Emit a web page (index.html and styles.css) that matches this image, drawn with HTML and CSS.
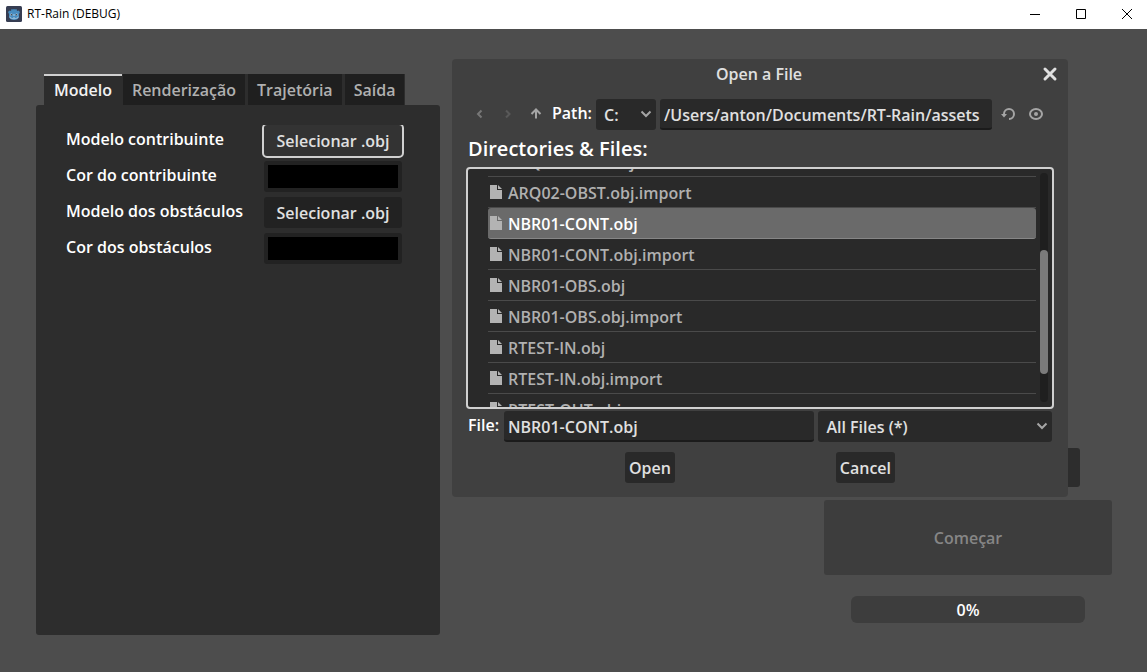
FILE: index.html
```html
<!DOCTYPE html>
<html lang="pt">
<head>
<meta charset="utf-8">
<meta name="viewport" content="width=device-width, initial-scale=1">
<title>RT-Rain (DEBUG)</title>
<link rel="stylesheet" href="styles.css">
</head>
<body>
<svg class="defs" width="0" height="0" aria-hidden="true">
  <symbol id="file" viewBox="0 0 12 14"><path d="M0 0H7V5H12V14H0ZM8 0L12 4H8Z"/></symbol>
  <symbol id="chevron" viewBox="0 0 12 8"><path d="M1.5 1.5L6 6L10.500 1.500" fill="none" stroke="currentColor" stroke-width="2"/></symbol>
</svg>

<header class="titlebar">
  <svg class="app-icon" viewBox="0 0 16 16" aria-hidden="true">
    <rect width="16" height="16" rx="1.500" fill="#363d52"/>
    <path d="M2 6L3.500 4.500L5 5L5.500 3L7 3.500L8 3L9 3.500L10.500 3L11 5L12.500 4.500L14 6L13 8V11Q12 14 8 14T3 11V8Z" fill="#478cbf"/>
    <path d="M3 10.500L5 11L5.500 12H7L7.500 11H8.500L9 12H10.500L11 11L13 10.500Q12.500 13 8 13.300Q3.500 13 3 10.500Z" fill="#8fb8d6"/>
    <circle cx="5.300" cy="8.700" r="1.100" fill="#b5cfe2"/><circle cx="10.700" cy="8.700" r="1.100" fill="#b5cfe2"/>
    <circle cx="5.500" cy="8.700" r=".8" fill="#414042"/><circle cx="10.500" cy="8.700" r=".8" fill="#414042"/>
    <rect x="7.600" y="8" width=".8" height="2" fill="#d5e4ef"/>
  </svg>
  <span class="app-title">RT-Rain (DEBUG)</span>
  <div class="window-controls">
    <button type="button" aria-label="Minimizar"><svg viewBox="0 0 12 12"><path d="M1 6.500H11"/></svg></button>
    <button type="button" aria-label="Maximizar"><svg viewBox="0 0 12 12"><path d="M1.500 1.500H10.500V10.500H1.500Z"/></svg></button>
    <button type="button" aria-label="Fechar"><svg viewBox="0 0 12 12"><path d="M1 1L11 11M11 1L1 11"/></svg></button>
  </div>
</header>

<main class="workspace">
  <section class="settings">
    <div class="tabs" role="tablist">
      <button type="button" class="tab tab-active" role="tab" aria-selected="true">Modelo</button>
      <button type="button" class="tab" role="tab" aria-selected="false">Renderização</button>
      <button type="button" class="tab" role="tab" aria-selected="false">Trajetória</button>
      <button type="button" class="tab" role="tab" aria-selected="false">Saída</button>
    </div>
    <div class="panel" role="tabpanel">
      <div class="form">
        <label for="model-a">Modelo contribuinte</label>
        <button type="button" class="button button-focused" id="model-a">Selecionar .obj</button>
        <label for="color-a">Cor do contribuinte</label>
        <input type="color" class="color" id="color-a" value="#000000">
        <label for="model-b">Modelo dos obstáculos</label>
        <button type="button" class="button" id="model-b">Selecionar .obj</button>
        <label for="color-b">Cor dos obstáculos</label>
        <input type="color" class="color" id="color-b" value="#000000">
      </div>
    </div>
  </section>

  <section class="actions">
    <div class="field-behind"></div>
    <button type="button" class="start" disabled>Começar</button>
    <div class="progress" role="progressbar" aria-valuenow="0" aria-valuemin="0" aria-valuemax="100">0%</div>
  </section>

  <section class="dialog" role="dialog" aria-labelledby="dialog-title">
    <div class="dialog-header">
      <h1 class="dialog-title" id="dialog-title">Open a File</h1>
      <button type="button" class="dialog-close" aria-label="Close"><svg viewBox="0 0 16 16"><path d="M3 3L13 13M13 3L3 13"/></svg></button>
    </div>

    <div class="path-row">
      <button type="button" class="tool tool-dim" aria-label="Back"><svg viewBox="0 0 16 16"><path d="M9.500 4.500L6 8L9.500 11.500"/></svg></button>
      <button type="button" class="tool tool-dimmer" aria-label="Forward"><svg viewBox="0 0 16 16"><path d="M6 4.500L9.500 8L6 11.500"/></svg></button>
      <button type="button" class="tool" aria-label="Up"><svg viewBox="0 0 16 16"><path d="M8 12.500V4.500M3.500 8L8 3.500L12.500 8"/></svg></button>
      <label class="label" for="path">Path:</label>
      <div class="select drive">
        <select aria-label="Drive"><option>C:</option></select>
        <svg class="chevron"><use href="#chevron"/></svg>
      </div>
      <input class="text path" id="path" type="text" value="/Users/anton/Documents/RT-Rain/assets">
      <button type="button" class="tool" aria-label="Refresh"><svg viewBox="0 0 16 16"><path d="M4 9V8A5 5 0 1 1 9 13"/><path class="solid" d="M1 8H7L4 11.500Z"/></svg></button>
      <button type="button" class="tool" aria-label="Show hidden files"><svg viewBox="0 0 16 16"><ellipse cx="8" cy="8" rx="6" ry="5"/><circle class="solid" cx="8" cy="8" r="2"/></svg></button>
    </div>

    <h2 class="heading">Directories &amp; Files:</h2>

    <div class="browser">
      <ul class="files">
        <li><svg class="file"><use href="#file"/></svg><span>ARQ02-OBST.obj</span></li>
        <li><svg class="file"><use href="#file"/></svg><span>ARQ02-OBST.obj.import</span></li>
        <li class="selected"><svg class="file"><use href="#file"/></svg><span>NBR01-CONT.obj</span></li>
        <li><svg class="file"><use href="#file"/></svg><span>NBR01-CONT.obj.import</span></li>
        <li><svg class="file"><use href="#file"/></svg><span>NBR01-OBS.obj</span></li>
        <li><svg class="file"><use href="#file"/></svg><span>NBR01-OBS.obj.import</span></li>
        <li><svg class="file"><use href="#file"/></svg><span>RTEST-IN.obj</span></li>
        <li><svg class="file"><use href="#file"/></svg><span>RTEST-IN.obj.import</span></li>
        <li><svg class="file"><use href="#file"/></svg><span>RTEST-OUT.obj</span></li>
      </ul>
      <div class="scrollbar"><div class="thumb"></div></div>
    </div>

    <div class="file-row">
      <label class="label" for="file-name">File:</label>
      <input class="text file-name" id="file-name" type="text" value="NBR01-CONT.obj">
      <div class="select filter">
        <select aria-label="Filter"><option>All Files (*)</option></select>
        <svg class="chevron"><use href="#chevron"/></svg>
      </div>
    </div>

    <div class="dialog-buttons">
      <button type="button" class="dialog-button">Open</button>
      <button type="button" class="dialog-button">Cancel</button>
    </div>
  </section>
</main>
</body>
</html>
```
FILE: styles.css
```css
* {
  box-sizing: border-box;
}

body {
  margin: 0;
  min-height: 100vh;
  display: flex;
  flex-direction: column;
  background: #4d4d4d;
  color: #fff;
  font: 600 16px/22px "Open Sans", "Noto Sans", sans-serif;
}

button,
input,
select {
  margin: 0;
  border: 0;
  font: inherit;
  color: #e0e0e0;
}

svg {
  display: block;
  flex: none;
}

.defs {
  position: absolute;
}

/* Window title bar */
.titlebar {
  height: 29px;
  padding: 0 8px 2px 6px;
  display: flex;
  align-items: center;
  gap: 5px;
  background: #fff;
  color: #000;
}

.app-icon {
  width: 16px;
  height: 16px;
}

.app-title {
  font: 400 12px/16px "Open Sans", sans-serif;
}

.window-controls {
  margin-left: auto;
  display: flex;
  gap: 22px;
}

.window-controls button {
  width: 24px;
  height: 24px;
  padding: 6px;
  background: none;
}

.window-controls svg {
  width: 12px;
  height: 12px;
  fill: none;
  stroke: #000;
}

/* Workspace */
.workspace {
  position: relative;
  flex: 1;
  display: grid;
  grid-template-columns: 404fr 672fr;
  padding: 45px 35px 37px 36px;
}

.settings {
  display: flex;
  flex-direction: column;
}

.tabs {
  display: flex;
  padding-left: 8px;
}

.tab {
  height: 31px;
  padding: 0 9px;
  border: solid #2d2d2d;
  border-width: 0 2px 0 1px;
  background: #1f1f1f;
  color: #b0b0b0;
}

.tab:last-child {
  border-right-width: 1px;
}

.tab-active {
  border-width: 2px 0 0;
  border-color: #d0d0d0;
  padding: 0 10px 2px;
  background: #2d2d2d;
  color: #f2f2f2;
}

.panel {
  flex: 1;
  padding: 20px 36px 20px 30px;
  border-radius: 3px;
  background: #2d2d2d;
}

.form {
  display: grid;
  grid-template-columns: 1fr 138px;
  gap: 5px 16px;
  padding: 0 2px 2px 0;
  overflow: hidden;
}

.form label {
  line-height: 28px;
}

.button,
.color {
  width: 100%;
  height: 31px;
  padding: 0;
  border-radius: 3px;
  background: #222;
}

.button-focused {
  background: #333;
  outline: 2px solid #d0d0d0;
}

.color {
  padding: 4px;
}

.color::-webkit-color-swatch-wrapper {
  padding: 0;
}

.color::-webkit-color-swatch {
  border: 0;
}

/* Right-hand actions */
.actions {
  justify-self: end;
  align-self: end;
  width: 288px;
  padding-bottom: 12px;
  display: flex;
  flex-direction: column;
  align-items: center;
}

.field-behind {
  width: 224px;
  height: 39px;
  margin-bottom: 13px;
  border-radius: 3px;
  background: #2d2d2d;
}

.start {
  width: 100%;
  height: 75px;
  margin-bottom: 21px;
  border-radius: 3px;
  background: #3d3d3d;
  color: #868686;
}

.progress {
  width: 234px;
  padding: 3px 0 2px;
  border-radius: 6px;
  background: #3d3d3d;
  text-align: center;
}

/* File dialog, floating over the workspace */
.dialog {
  position: absolute;
  top: 30px;
  left: 452px;
  right: 79px;
  padding: 0 16px 14px;
  border-radius: 4px;
  background: #404040;
}

.dialog-header {
  height: 40px;
  padding: 4px 0 14px;
  display: grid;
  grid-template-columns: 8px 1fr 16px;
  column-gap: 6px;
  align-items: center;
  margin-right: -6px;
}

.dialog-title {
  grid-column: 2;
  margin: 0;
  font-size: 16px;
  font-weight: 600;
  text-align: center;
  color: #e0e0e0;
}

.dialog-close {
  padding: 0;
  background: none;
}

.dialog-close svg {
  width: 16px;
  height: 16px;
  fill: none;
  stroke: #e0e0e0;
  stroke-width: 3;
  stroke-linecap: round;
}

.path-row {
  display: flex;
  align-items: center;
  gap: 4px;
  padding-right: 4px;
}

.tool {
  width: 24px;
  height: 31px;
  padding: 3px 4px 5px;
  background: none;
  color: #a5a5a5;
}

.tool-dim {
  color: #777;
}

.tool-dimmer {
  color: #595959;
}

.tool svg {
  width: 16px;
  height: 16px;
  fill: none;
  stroke: currentColor;
  stroke-width: 2;
}

.tool .solid {
  fill: currentColor;
  stroke: none;
}

.label {
  padding-bottom: 3px;
}

.select {
  position: relative;
  display: flex;
}

.select select {
  width: 100%;
  height: 31px;
  padding: 0 24px 0 8px;
  border-radius: 3px;
  background: #292929;
  appearance: none;
}

.chevron {
  position: absolute;
  top: 11px;
  right: 4px;
  width: 12px;
  height: 8px;
  color: #a5a5a5;
  pointer-events: none;
}

.drive {
  width: 60px;
}

.text {
  flex: 1;
  min-width: 0;
  height: 31px;
  padding: 2px 4px 0;
  border-bottom: 2px solid #1b1b1b;
  border-radius: 3px;
  background: #292929;
}

.heading {
  margin: 5px 0 4px;
  font-size: 20px;
  font-weight: 600;
  line-height: 28px;
}

.browser {
  display: flex;
  justify-content: space-between;
  gap: 4px;
  height: 242px;
  margin: 0 -2px 2px;
  padding: 0 4px 0 20px;
  border: 2px solid #d0d0d0;
  border-radius: 4px;
  background: #292929;
  overflow: hidden;
}

/* The list is scrolled so that its first row is mostly out of view. */
.files {
  flex: 1;
  margin: -23px 0 0;
  padding: 0;
  list-style: none;
  color: #b0b0b0;
}

.files li {
  height: 31px;
  padding: 0 2px;
  display: flex;
  align-items: center;
  gap: 6px;
  border-bottom: 1px solid #4a4a4a;
}

.files span {
  padding-top: 2px;
}

.files .selected {
  border-color: #868686;
  border-radius: 3px;
  background: #6a6a6a;
  color: #fff;
}

.file {
  width: 12px;
  height: 14px;
  fill: #b3b3b3;
}

.scrollbar {
  width: 8px;
  margin: 4px 0 5px;
  padding-top: 77px;
  border-radius: 4px;
  background: #1f1f1f;
}

.thumb {
  height: 124px;
  border-radius: 4px;
  background: #7b7b7b;
}

.file-row {
  display: flex;
  align-items: center;
  gap: 4px;
}

.file-row .label {
  min-width: 32px;
}

.filter {
  width: 40%;
}

.dialog-buttons {
  display: flex;
  justify-content: space-evenly;
  gap: 4px;
  padding-top: 10px;
}

.dialog-button {
  height: 31px;
  padding: 0 4px;
  border-radius: 3px;
  background: #292929;
}
```
